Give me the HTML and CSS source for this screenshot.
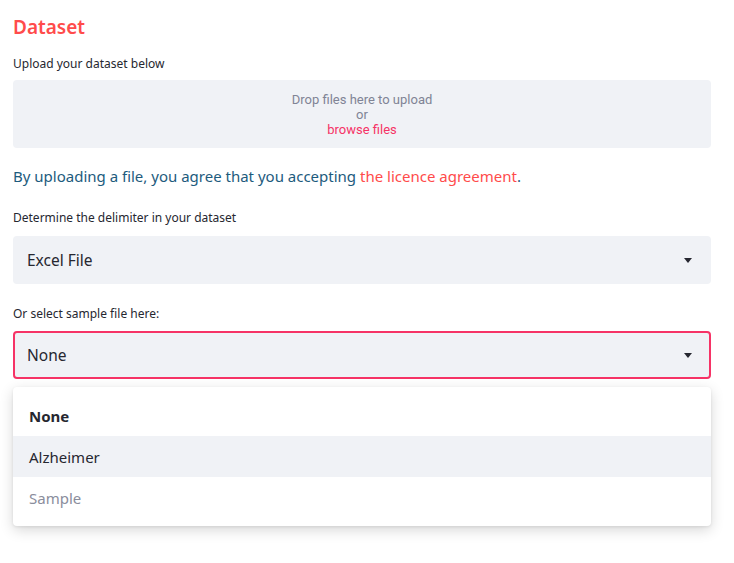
FILE: index.html
```html
<!DOCTYPE html>
<html>
<head>
<meta charset="utf-8">
<link rel="stylesheet" href="styles.css">
</head>
<body>
<main class="page">
  <h2 class="title">Dataset</h2>
  <div class="label">Upload your dataset below</div>
  <div class="dropzone">
    <span>Drop files here to upload</span>
    <span>or</span>
    <span class="browse">browse files</span>
  </div>
  <p class="agree">By uploading a file, you agree that you accepting <span class="link">the licence agreement</span>.</p>
  <div class="label">Determine the delimiter in your dataset</div>
  <div class="select">
    <span>Excel File</span>
    <svg class="caret" width="8" height="5" viewBox="0 0 8 5"><path d="M0 0H8L4 5Z" fill="#262730"/></svg>
  </div>
  <div class="label label-2">Or select sample file here:</div>
  <div class="select focused">
    <span>None</span>
    <svg class="caret" width="8" height="5" viewBox="0 0 8 5"><path d="M0 0H8L4 5Z" fill="#262730"/></svg>
  </div>
  <div class="menu-wrap">
    <ul class="menu">
      <li class="selected">None</li>
      <li class="hover">Alzheimer</li>
      <li class="muted">Sample</li>
    </ul>
  </div>
</main>
</body>
</html>
```

FILE: styles.css
```css
* { box-sizing: border-box; }
html, body { margin: 0; padding: 0; background: #fff; }
body { font-family: "Noto Sans", "Open Sans", sans-serif; color: #262730; }
.page { width: 698px; margin-left: 13px; padding-top: 14px; padding-bottom: 37px; display: flex; flex-direction: column; }
.title { margin: 0; font-size: 19px; font-weight: 600; color: #ff4b4b; line-height: 26px; height: 26px; }
.label { font-size: 12px; line-height: 16px; margin-top: 16px; color: #262730; }
.label + .dropzone { margin-top: 8px; }
.label + .select { margin-top: 10px; }
.dropzone { height: 68px; background: #f0f2f6; border-radius: 4px; display: flex; flex-direction: column; align-items: center; justify-content: center; font-family: Roboto, sans-serif; font-size: 13px; line-height: 15px; color: #808495; padding-top: 1px; }
.browse { color: #f63366; }
.agree { margin: 16px 0 0; font-size: 15px; line-height: 24px; color: #1d5b7d; }
.link { color: #ff4b4b; }
.agree + .label { margin-top: 22px; }
.select { height: 48px; background: #f0f2f6; border-radius: 4px; display: flex; align-items: center; justify-content: space-between; padding: 0 17px 0 14px; font-size: 15.5px; color: #262730; border: 2px solid transparent; }
.select span { margin-left: -2px; }
.label-2 { margin-top: 22px; }
.label-2 + .select { margin-top: 9px; }
.focused { border-color: #f63366; }
.menu-wrap { margin-top: 8px; }
.menu { list-style: none; margin: 0; padding: 8px 0 8px; background: #fff; border-radius: 4px; box-shadow: 0 4px 14px rgba(0,0,0,0.16), 0 1px 3px rgba(0,0,0,0.08); }
.menu li { height: 41px; display: flex; align-items: center; padding-left: 16px; font-size: 15px; color: #262730; }
.menu .selected { font-weight: 700; }
.menu .hover { background: #f0f2f6; }
.menu .muted { color: #8a8d9c; }
```
